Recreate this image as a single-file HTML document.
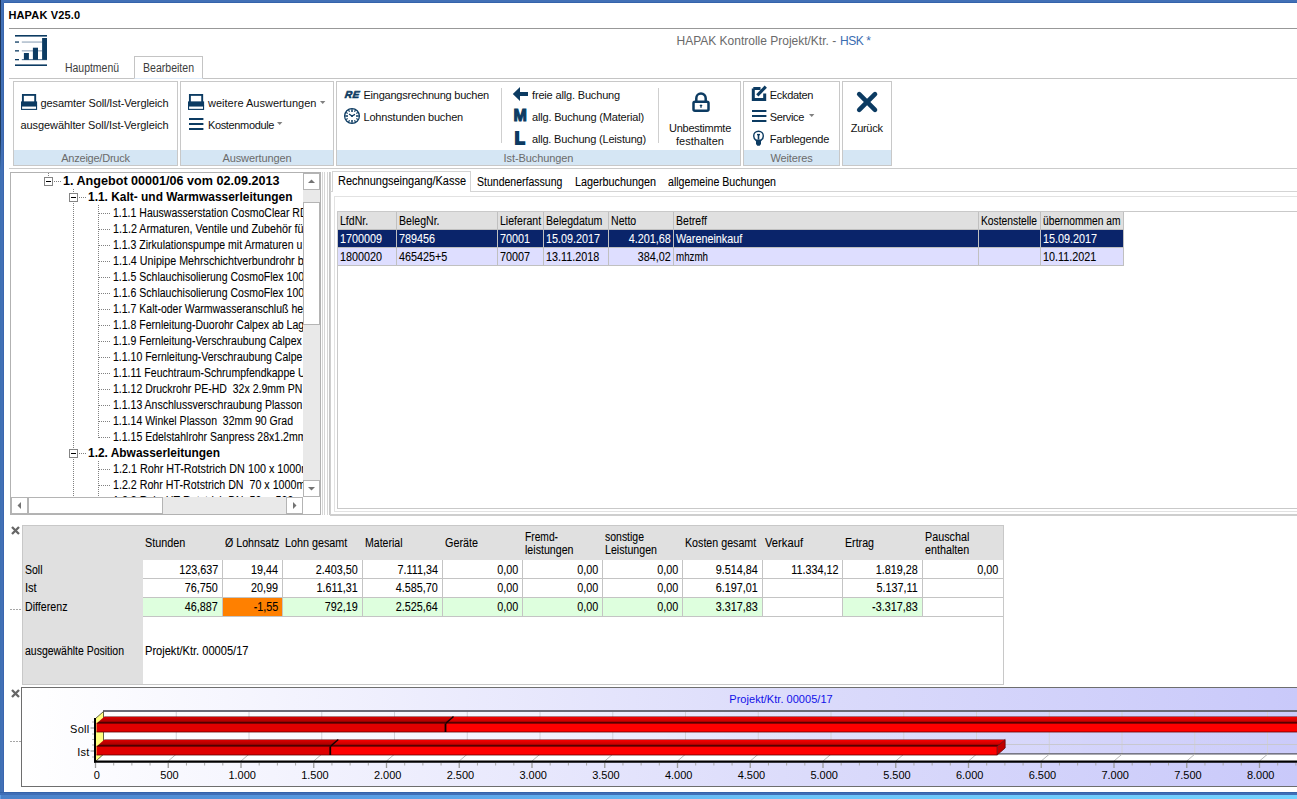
<!DOCTYPE html>
<html lang="de"><head><meta charset="utf-8"><title>HAPAK V25.0</title>
<style>
html,body{margin:0;padding:0;}
body{width:1297px;height:799px;overflow:hidden;background:#fff;position:relative;font-family:'Liberation Sans', sans-serif;}
#app{position:absolute;left:0;top:0;width:1297px;height:799px;overflow:hidden;}
#app div,#app span,#app svg{position:absolute;box-sizing:border-box;}
</style></head><body><div id="app">
<div style="left:0px;top:0px;width:1297px;height:3px;background:#4270b6;"></div>
<div style="left:0px;top:2px;width:1297px;height:1px;background:#3563ab;"></div>
<div style="left:0px;top:0px;width:4px;height:799px;background:#4270b6;"></div>
<div style="left:3px;top:3px;width:1px;height:789px;background:#3a66ae;"></div>
<div style="left:0px;top:0px;width:1px;height:799px;background:#3e70b2;"></div>
<div style="left:0px;top:0px;width:1px;height:170px;background:linear-gradient(180deg,#1d3358 0,#1e3c60 140px,#3e70b2 170px);"></div>
<div style="left:0px;top:792px;width:1297px;height:7px;background:linear-gradient(90deg,#4a80c8 0,#5aa0e6 400px,#6cc4f8 800px,#74d2fe 1297px);"></div>
<div style="left:0px;top:792px;width:1297px;height:3px;background:#3f6eb6;"></div>
<div style="left:0px;top:792px;width:1297px;height:1px;background:#3362aa;"></div>
<div style="left:0px;top:795px;width:1px;height:4px;background:#5e9be0;"></div>
<span style="top:7.19px;font:bold 11px 'Liberation Sans', sans-serif;line-height:16px;color:#000;white-space:pre;letter-spacing:0.172px;left:8.4px;">HAPAK V25.0</span>
<div style="left:9px;top:28px;width:1288px;height:1px;background:#989898;"></div>
<svg style="left:14px;top:34px" width="35" height="34" viewBox="14 34 35 34">
<rect x="15" y="35" width="32" height="1.6" fill="#0c3b62"/>
<rect x="15" y="64.4" width="32" height="1.6" fill="#0c3b62"/>
<rect x="15" y="41.4" width="4" height="1.3" fill="#0c3b62"/>
<rect x="15" y="50.2" width="4" height="1.3" fill="#0c3b62"/>
<rect x="15" y="59" width="4" height="1.3" fill="#0c3b62"/>
<rect x="21.8" y="41.5" width="20.2" height="1.1" fill="#8fa3b8"/>
<rect x="21.8" y="50.3" width="20.2" height="1.1" fill="#8fa3b8"/>
<rect x="21.8" y="59" width="25.2" height="1.2" fill="#5f7d99"/>
<rect x="23.9" y="53" width="5" height="6.8" fill="#0c3b62"/>
<rect x="32.9" y="47.7" width="5.1" height="12.1" fill="#0c3b62"/>
<rect x="42.1" y="38" width="4.9" height="21.8" fill="#0c3b62"/>
</svg>
<span style="top:33.34px;font:12px 'Liberation Sans', sans-serif;line-height:16px;color:#6a6a6a;white-space:pre;letter-spacing:-0.006px;left:676.5px;">HAPAK Kontrolle Projekt/Ktr. - </span>
<span style="top:33.34px;font:12px 'Liberation Sans', sans-serif;line-height:16px;color:#3a6cb0;white-space:pre;letter-spacing:-0.438px;left:840px;">HSK *</span>
<div style="left:9px;top:78px;width:1288px;height:1px;background:#c4c4c4;"></div>
<div style="left:134px;top:56px;width:69px;height:23px;background:#fff;border:1px solid #c4c4c4;border-bottom:1px solid #dfeaf6;"></div>
<span style="top:59.84px;font:12px 'Liberation Sans', sans-serif;line-height:16px;color:#3c3c3c;white-space:pre;left:65.0px;transform:scaleX(0.8703);transform-origin:0 0;-webkit-text-stroke:0;">Hauptmenü</span>
<span style="top:59.84px;font:12px 'Liberation Sans', sans-serif;line-height:16px;color:#3c3c3c;white-space:pre;left:142.5px;transform:scaleX(0.8786);transform-origin:0 0;-webkit-text-stroke:0;">Bearbeiten</span>
<div style="left:13px;top:81px;width:165px;height:85px;background:#fff;border:1px solid #c8c8c8;"></div>
<div style="left:14px;top:150px;width:163px;height:15px;background:#d5e6f4;"></div>
<span style="top:149.79px;font:11px 'Liberation Sans', sans-serif;line-height:16px;color:#6b6b6b;white-space:pre;letter-spacing:-0.234px;left:61.25px;">Anzeige/Druck</span>
<div style="left:180px;top:81px;width:154px;height:85px;background:#fff;border:1px solid #c8c8c8;"></div>
<div style="left:181px;top:150px;width:152px;height:15px;background:#d5e6f4;"></div>
<span style="top:149.79px;font:11px 'Liberation Sans', sans-serif;line-height:16px;color:#6b6b6b;white-space:pre;letter-spacing:-0.111px;left:222.50px;">Auswertungen</span>
<div style="left:336px;top:81px;width:405px;height:85px;background:#fff;border:1px solid #c8c8c8;"></div>
<div style="left:337px;top:150px;width:403px;height:15px;background:#d5e6f4;"></div>
<span style="top:149.79px;font:11px 'Liberation Sans', sans-serif;line-height:16px;color:#6b6b6b;white-space:pre;letter-spacing:-0.088px;left:503.60px;">Ist-Buchungen</span>
<div style="left:743px;top:81px;width:97px;height:85px;background:#fff;border:1px solid #c8c8c8;"></div>
<div style="left:744px;top:150px;width:95px;height:15px;background:#d5e6f4;"></div>
<span style="top:149.79px;font:11px 'Liberation Sans', sans-serif;line-height:16px;color:#6b6b6b;white-space:pre;letter-spacing:-0.150px;left:770.50px;">Weiteres</span>
<div style="left:842px;top:81px;width:50px;height:85px;background:#fff;border:1px solid #c8c8c8;"></div>
<div style="left:843px;top:150px;width:48px;height:15px;background:#d5e6f4;"></div>
<div style="left:9px;top:168px;width:1288px;height:1px;background:#cbcbcb;"></div>
<svg style="left:20.9px;top:93.9px" width="17" height="17" viewBox="0 0 17 17">
<rect x="1.9" y="0.9" width="12.3" height="8" fill="none" stroke="#0c3b62" stroke-width="1.9"/>
<rect x="0" y="7.4" width="16.1" height="4.6" fill="#0c3b62"/>
<rect x="0.55" y="12" width="15" height="3.4" fill="#fff" stroke="#0c3b62" stroke-width="1.1"/>
</svg>
<span style="top:95.19px;font:11px 'Liberation Sans', sans-serif;line-height:16px;color:#111;white-space:pre;letter-spacing:-0.105px;left:40.5px;">gesamter Soll/Ist-Vergleich</span>
<span style="top:117.19px;font:11px 'Liberation Sans', sans-serif;line-height:16px;color:#111;white-space:pre;letter-spacing:-0.078px;left:20.5px;">ausgewählter Soll/Ist-Vergleich</span>
<svg style="left:188.4px;top:93.9px" width="17" height="17" viewBox="0 0 17 17">
<rect x="1.9" y="0.9" width="12.3" height="8" fill="none" stroke="#0c3b62" stroke-width="1.9"/>
<rect x="0" y="7.4" width="16.1" height="4.6" fill="#0c3b62"/>
<rect x="0.55" y="12" width="15" height="3.4" fill="#fff" stroke="#0c3b62" stroke-width="1.1"/>
</svg>
<span style="top:95.19px;font:11px 'Liberation Sans', sans-serif;line-height:16px;color:#111;white-space:pre;letter-spacing:0.013px;left:208px;">weitere Auswertungen</span>
<svg style="left:319.5px;top:100.5px" width="6" height="4" viewBox="0 0 6 4"><path d="M0 0H5.4L2.7 3Z" fill="#808080"/></svg>
<svg style="left:188.6px;top:118px" width="15" height="13" viewBox="0 0 15 13">
<rect x="0" y="0" width="14.4" height="2" fill="#0c3b62"/><rect x="0" y="5" width="14.4" height="2" fill="#0c3b62"/><rect x="0" y="10" width="14.4" height="2" fill="#0c3b62"/></svg>
<span style="top:117.19px;font:11px 'Liberation Sans', sans-serif;line-height:16px;color:#111;white-space:pre;letter-spacing:-0.361px;left:208px;">Kostenmodule</span>
<svg style="left:277px;top:122px" width="6" height="4" viewBox="0 0 6 4"><path d="M0 0H5.4L2.7 3Z" fill="#808080"/></svg>
<span style="top:86.53px;font:italic bold 10px 'Liberation Sans', sans-serif;line-height:16px;color:#0c3b62;white-space:pre;letter-spacing:0.547px;left:344.6px;-webkit-text-stroke:0.6px #0c3b62;transform:skewX(-8deg);">RE</span>
<span style="top:87.19px;font:11px 'Liberation Sans', sans-serif;line-height:16px;color:#111;white-space:pre;letter-spacing:-0.234px;left:363.5px;">Eingangsrechnung buchen</span>
<svg style="left:343px;top:107px" width="18" height="18" viewBox="0 0 18 18">
<circle cx="9" cy="9" r="7.4" fill="none" stroke="#0c3b62" stroke-width="1.25"/>
<g stroke="#0c3b62" stroke-width="1.5">
<path d="M9 2.2V5 M9 13V15.8 M2.2 9H5 M13 9H15.8"/>
<path d="M5.6 3.1l.9 1.6 M12.4 3.1l-.9 1.6 M3.1 5.6l1.6 .9 M14.9 5.6l-1.6 .9 M3.1 12.4l1.6-.9 M14.9 12.4l-1.6-.9 M5.6 14.9l.9-1.6 M12.4 14.9l-.9-1.6" stroke-width="1.2"/>
<path d="M9 9L6 7 M9 9l3-1.6" stroke-width="1.3"/></g>
<circle cx="9" cy="9" r="1.1" fill="#0c3b62"/></svg>
<span style="top:109.19px;font:11px 'Liberation Sans', sans-serif;line-height:16px;color:#111;white-space:pre;letter-spacing:-0.181px;left:363.5px;">Lohnstunden buchen</span>
<div style="left:501px;top:88px;width:1px;height:55px;background:#cfcfcf;"></div>
<svg style="left:512px;top:86px" width="17" height="16" viewBox="512 86 17 16"><path d="M512.8 94L520 87.1V92H528V96H520V100.9Z" fill="#0c3b62"/></svg>
<span style="top:87.19px;font:11px 'Liberation Sans', sans-serif;line-height:16px;color:#111;white-space:pre;letter-spacing:-0.164px;left:532px;">freie allg. Buchung</span>
<span style="top:107.86px;font:bold 16px 'Liberation Sans', sans-serif;line-height:16px;color:#0c3b62;white-space:pre;letter-spacing:-0.128px;left:513.4px;-webkit-text-stroke:1.1px #0c3b62;">M</span>
<span style="top:109.19px;font:11px 'Liberation Sans', sans-serif;line-height:16px;color:#111;white-space:pre;letter-spacing:-0.174px;left:532px;">allg. Buchung (Material)</span>
<span style="top:130.18px;font:bold 16.5px 'Liberation Sans', sans-serif;line-height:16px;color:#0c3b62;white-space:pre;left:514.7px;-webkit-text-stroke:1.8px #0c3b62;">L</span>
<span style="top:131.19px;font:11px 'Liberation Sans', sans-serif;line-height:16px;color:#111;white-space:pre;letter-spacing:-0.193px;left:532px;">allg. Buchung (Leistung)</span>
<div style="left:658px;top:88px;width:1px;height:55px;background:#cfcfcf;"></div>
<svg style="left:690px;top:90px" width="22" height="24" viewBox="690 90 22 24">
<path d="M696.3 101.5V98.2a4.7 4.7 0 0 1 9.4 0V101.5" fill="none" stroke="#0c3b62" stroke-width="2.5"/>
<rect x="693.5" y="101.7" width="15" height="9.1" rx="1.5" fill="#fff" stroke="#0c3b62" stroke-width="2.5"/>
<path d="M701 104.3l1.7 1.8h-1v1.6h-1.4v-1.6h-1z" fill="#0c3b62"/></svg>
<span style="top:120.19px;font:11px 'Liberation Sans', sans-serif;line-height:16px;color:#111;white-space:pre;letter-spacing:-0.254px;left:669.00px;">Unbestimmte</span>
<span style="top:133.19px;font:11px 'Liberation Sans', sans-serif;line-height:16px;color:#111;white-space:pre;letter-spacing:0.030px;left:676.00px;">festhalten</span>
<svg style="left:751px;top:85px" width="17" height="17" viewBox="751 85 17 17">
<path d="M753.3 88.6H760.5 M753.3 88.6V99.4H764.7V93.5" fill="none" stroke="#0c3b62" stroke-width="3"/>
<path d="M757.3 95.3L765.8 86.7" stroke="#0c3b62" stroke-width="3.1"/></svg>
<span style="top:87.19px;font:11px 'Liberation Sans', sans-serif;line-height:16px;color:#111;white-space:pre;letter-spacing:-0.322px;left:769.8px;">Eckdaten</span>
<svg style="left:751.8px;top:110px" width="15" height="13" viewBox="0 0 15 13">
<rect x="0" y="0" width="14.4" height="2" fill="#0c3b62"/><rect x="0" y="5" width="14.4" height="2" fill="#0c3b62"/><rect x="0" y="10" width="14.4" height="2" fill="#0c3b62"/></svg>
<span style="top:109.19px;font:11px 'Liberation Sans', sans-serif;line-height:16px;color:#111;white-space:pre;letter-spacing:-0.355px;left:769.8px;">Service</span>
<svg style="left:809px;top:114.2px" width="6" height="4" viewBox="0 0 6 4"><path d="M0 0H5.4L2.7 3Z" fill="#808080"/></svg>
<svg style="left:752px;top:129px" width="14" height="18" viewBox="752 129 14 18">
<path d="M756.3 140.6c-1.6-1-2.6-2.6-2.6-4.6a4.8 4.8 0 0 1 9.6 0c0 2-1 3.6-2.6 4.6" fill="none" stroke="#0c3b62" stroke-width="1.4"/>
<path d="M756 139.5h5v4.5l-1.3 1.8h-2.4l-1.3-1.8z" fill="#0c3b62"/>
<path d="M758.5 134.5v5" stroke="#0c3b62" stroke-width="1.6"/><path d="M757 134.6h3" stroke="#0c3b62" stroke-width="1.4"/></svg>
<span style="top:131.19px;font:11px 'Liberation Sans', sans-serif;line-height:16px;color:#111;white-space:pre;letter-spacing:-0.226px;left:769.8px;">Farblegende</span>
<svg style="left:855px;top:90px" width="24" height="24" viewBox="855 90 24 24"><path d="M859.2 94.1L875 109.9 M875 94.1L859.2 109.9" stroke="#0c3b62" stroke-width="4.6" stroke-linecap="round"/></svg>
<span style="top:120.19px;font:11px 'Liberation Sans', sans-serif;line-height:16px;color:#111;white-space:pre;letter-spacing:-0.271px;left:850.70px;">Zurück</span>
<div style="left:10px;top:172px;width:311px;height:343px;background:#fff;border:1px solid #b2b2b2;"></div>
<div style="left:11px;top:173px;width:292px;height:324px;overflow:hidden">
<span style="top:-0.16px;font:bold 12px 'Liberation Sans', sans-serif;line-height:16px;color:#000;white-space:pre;left:52.0px;transform:scaleX(1.0492);transform-origin:0 0;">1. Angebot 00001/06 vom 02.09.2013</span>
<span style="top:15.84px;font:bold 12px 'Liberation Sans', sans-serif;line-height:16px;color:#000;white-space:pre;left:77.0px;transform:scaleX(0.9946);transform-origin:0 0;">1.1. Kalt- und Warmwasserleitungen</span>
<span style="top:31.84px;font:12px 'Liberation Sans', sans-serif;line-height:16px;color:#000;white-space:pre;-webkit-text-stroke:0.08px #000;left:101.5px;transform:scaleX(0.8760);transform-origin:0 0;">1.1.1 Hauswasserstation CosmoClear RD 1</span>
<span style="top:47.84px;font:12px 'Liberation Sans', sans-serif;line-height:16px;color:#000;white-space:pre;-webkit-text-stroke:0.08px #000;left:101.5px;transform:scaleX(0.8950);transform-origin:0 0;">1.1.2 Armaturen, Ventile und Zubehör fü</span>
<span style="top:63.84px;font:12px 'Liberation Sans', sans-serif;line-height:16px;color:#000;white-space:pre;-webkit-text-stroke:0.08px #000;left:101.5px;transform:scaleX(0.8760);transform-origin:0 0;">1.1.3 Zirkulationspumpe mit Armaturen u</span>
<span style="top:79.84px;font:12px 'Liberation Sans', sans-serif;line-height:16px;color:#000;white-space:pre;-webkit-text-stroke:0.08px #000;left:101.5px;transform:scaleX(0.8930);transform-origin:0 0;">1.1.4 Unipipe Mehrschichtverbundrohr b</span>
<span style="top:95.84px;font:12px 'Liberation Sans', sans-serif;line-height:16px;color:#000;white-space:pre;-webkit-text-stroke:0.08px #000;left:101.5px;transform:scaleX(0.8760);transform-origin:0 0;">1.1.5 Schlauchisolierung CosmoFlex 100</span>
<span style="top:111.84px;font:12px 'Liberation Sans', sans-serif;line-height:16px;color:#000;white-space:pre;-webkit-text-stroke:0.08px #000;left:101.5px;transform:scaleX(0.8760);transform-origin:0 0;">1.1.6 Schlauchisolierung CosmoFlex 100</span>
<span style="top:127.84px;font:12px 'Liberation Sans', sans-serif;line-height:16px;color:#000;white-space:pre;-webkit-text-stroke:0.08px #000;left:101.5px;transform:scaleX(0.8760);transform-origin:0 0;">1.1.7 Kalt-oder Warmwasseranschluß he</span>
<span style="top:143.84px;font:12px 'Liberation Sans', sans-serif;line-height:16px;color:#000;white-space:pre;-webkit-text-stroke:0.08px #000;left:101.5px;transform:scaleX(0.8760);transform-origin:0 0;">1.1.8 Fernleitung-Duorohr Calpex ab Lag</span>
<span style="top:159.84px;font:12px 'Liberation Sans', sans-serif;line-height:16px;color:#000;white-space:pre;-webkit-text-stroke:0.08px #000;left:101.5px;transform:scaleX(0.8760);transform-origin:0 0;">1.1.9 Fernleitung-Verschraubung Calpex</span>
<span style="top:175.84px;font:12px 'Liberation Sans', sans-serif;line-height:16px;color:#000;white-space:pre;-webkit-text-stroke:0.08px #000;left:101.5px;transform:scaleX(0.8760);transform-origin:0 0;">1.1.10 Fernleitung-Verschraubung Calpe</span>
<span style="top:191.84px;font:12px 'Liberation Sans', sans-serif;line-height:16px;color:#000;white-space:pre;-webkit-text-stroke:0.08px #000;left:101.5px;transform:scaleX(0.8760);transform-origin:0 0;">1.1.11 Feuchtraum-Schrumpfendkappe U</span>
<span style="top:207.84px;font:12px 'Liberation Sans', sans-serif;line-height:16px;color:#000;white-space:pre;-webkit-text-stroke:0.08px #000;left:101.5px;transform:scaleX(0.8760);transform-origin:0 0;">1.1.12 Druckrohr PE-HD  32x 2.9mm PN</span>
<span style="top:223.84px;font:12px 'Liberation Sans', sans-serif;line-height:16px;color:#000;white-space:pre;-webkit-text-stroke:0.08px #000;left:101.5px;transform:scaleX(0.8760);transform-origin:0 0;">1.1.13 Anschlussverschraubung Plasson</span>
<span style="top:239.84px;font:12px 'Liberation Sans', sans-serif;line-height:16px;color:#000;white-space:pre;-webkit-text-stroke:0.08px #000;left:101.5px;transform:scaleX(0.8762);transform-origin:0 0;">1.1.14 Winkel Plasson  32mm 90 Grad</span>
<span style="top:255.84px;font:12px 'Liberation Sans', sans-serif;line-height:16px;color:#000;white-space:pre;-webkit-text-stroke:0.08px #000;left:101.5px;transform:scaleX(0.8760);transform-origin:0 0;">1.1.15 Edelstahlrohr Sanpress 28x1.2mm</span>
<span style="top:271.84px;font:bold 12px 'Liberation Sans', sans-serif;line-height:16px;color:#000;white-space:pre;left:77.0px;transform:scaleX(0.9929);transform-origin:0 0;">1.2. Abwasserleitungen</span>
<span style="top:287.84px;font:12px 'Liberation Sans', sans-serif;line-height:16px;color:#000;white-space:pre;-webkit-text-stroke:0.08px #000;left:101.5px;transform:scaleX(0.8990);transform-origin:0 0;">1.2.1 Rohr HT-Rotstrich DN 100 x 1000m</span>
<span style="top:303.84px;font:12px 'Liberation Sans', sans-serif;line-height:16px;color:#000;white-space:pre;-webkit-text-stroke:0.08px #000;left:101.5px;transform:scaleX(0.8900);transform-origin:0 0;">1.2.2 Rohr HT-Rotstrich DN  70 x 1000m</span>
<span style="top:319.84px;font:12px 'Liberation Sans', sans-serif;line-height:16px;color:#000;white-space:pre;-webkit-text-stroke:0.08px #000;left:101.5px;transform:scaleX(0.8900);transform-origin:0 0;">1.2.3 Rohr HT-Rotstrich DN  50 x  500m</span>
<div style="left:37px;top:0px;width:1px;height:4px;background:repeating-linear-gradient(180deg,#808080 0 1px,transparent 1px 2px);background-position:0 0px;"></div>
<div style="left:33px;top:4px;width:9px;height:9px;background:#fff;border:1px solid #848484;"></div>
<div style="left:35px;top:8px;width:5px;height:1px;background:#000;"></div>
<div style="left:43px;top:8px;width:8px;height:1px;background:repeating-linear-gradient(90deg,#808080 0 1px,transparent 1px 2px);"></div>
<div style="left:62px;top:16px;width:1px;height:4px;background:repeating-linear-gradient(180deg,#808080 0 1px,transparent 1px 2px);background-position:0 0px;"></div>
<div style="left:58px;top:20px;width:9px;height:9px;background:#fff;border:1px solid #848484;"></div>
<div style="left:60px;top:24px;width:5px;height:1px;background:#000;"></div>
<div style="left:68px;top:24px;width:8px;height:1px;background:repeating-linear-gradient(90deg,#808080 0 1px,transparent 1px 2px);"></div>
<div style="left:62px;top:30px;width:1px;height:246px;background:repeating-linear-gradient(180deg,#808080 0 1px,transparent 1px 2px);background-position:0 0px;"></div>
<div style="left:87px;top:32px;width:1px;height:233px;background:repeating-linear-gradient(180deg,#808080 0 1px,transparent 1px 2px);background-position:0 0px;"></div>
<div style="left:88px;top:40px;width:12px;height:1px;background:repeating-linear-gradient(90deg,#808080 0 1px,transparent 1px 2px);"></div>
<div style="left:88px;top:56px;width:12px;height:1px;background:repeating-linear-gradient(90deg,#808080 0 1px,transparent 1px 2px);"></div>
<div style="left:88px;top:72px;width:12px;height:1px;background:repeating-linear-gradient(90deg,#808080 0 1px,transparent 1px 2px);"></div>
<div style="left:88px;top:88px;width:12px;height:1px;background:repeating-linear-gradient(90deg,#808080 0 1px,transparent 1px 2px);"></div>
<div style="left:88px;top:104px;width:12px;height:1px;background:repeating-linear-gradient(90deg,#808080 0 1px,transparent 1px 2px);"></div>
<div style="left:88px;top:120px;width:12px;height:1px;background:repeating-linear-gradient(90deg,#808080 0 1px,transparent 1px 2px);"></div>
<div style="left:88px;top:136px;width:12px;height:1px;background:repeating-linear-gradient(90deg,#808080 0 1px,transparent 1px 2px);"></div>
<div style="left:88px;top:152px;width:12px;height:1px;background:repeating-linear-gradient(90deg,#808080 0 1px,transparent 1px 2px);"></div>
<div style="left:88px;top:168px;width:12px;height:1px;background:repeating-linear-gradient(90deg,#808080 0 1px,transparent 1px 2px);"></div>
<div style="left:88px;top:184px;width:12px;height:1px;background:repeating-linear-gradient(90deg,#808080 0 1px,transparent 1px 2px);"></div>
<div style="left:88px;top:200px;width:12px;height:1px;background:repeating-linear-gradient(90deg,#808080 0 1px,transparent 1px 2px);"></div>
<div style="left:88px;top:216px;width:12px;height:1px;background:repeating-linear-gradient(90deg,#808080 0 1px,transparent 1px 2px);"></div>
<div style="left:88px;top:232px;width:12px;height:1px;background:repeating-linear-gradient(90deg,#808080 0 1px,transparent 1px 2px);"></div>
<div style="left:88px;top:248px;width:12px;height:1px;background:repeating-linear-gradient(90deg,#808080 0 1px,transparent 1px 2px);"></div>
<div style="left:88px;top:264px;width:12px;height:1px;background:repeating-linear-gradient(90deg,#808080 0 1px,transparent 1px 2px);"></div>
<div style="left:58px;top:276px;width:9px;height:9px;background:#fff;border:1px solid #848484;"></div>
<div style="left:60px;top:280px;width:5px;height:1px;background:#000;"></div>
<div style="left:68px;top:280px;width:8px;height:1px;background:repeating-linear-gradient(90deg,#808080 0 1px,transparent 1px 2px);"></div>
<div style="left:62px;top:286px;width:1px;height:41px;background:repeating-linear-gradient(180deg,#808080 0 1px,transparent 1px 2px);background-position:0 0px;"></div>
<div style="left:87px;top:288px;width:1px;height:39px;background:repeating-linear-gradient(180deg,#808080 0 1px,transparent 1px 2px);background-position:0 0px;"></div>
<div style="left:88px;top:296px;width:12px;height:1px;background:repeating-linear-gradient(90deg,#808080 0 1px,transparent 1px 2px);"></div>
<div style="left:88px;top:312px;width:12px;height:1px;background:repeating-linear-gradient(90deg,#808080 0 1px,transparent 1px 2px);"></div>
<div style="left:88px;top:328px;width:12px;height:1px;background:repeating-linear-gradient(90deg,#808080 0 1px,transparent 1px 2px);"></div>
</div>
<div style="left:303px;top:173px;width:17px;height:324px;background:#e9e9e9;"></div>
<div style="left:303px;top:173px;width:17px;height:17px;background:#fff;border:1px solid #b4b4b4;"></div>
<svg style="left:0;top:0" width="400" height="600" viewBox="0 0 400 600"><path d="M308.0 183.0L311.5 179.5L315.0 183.0Z" fill="#737373"/></svg>
<div style="left:303px;top:202px;width:17px;height:123px;background:#fff;border:1px solid #b4b4b4;"></div>
<div style="left:303px;top:480px;width:17px;height:17px;background:#fff;border:1px solid #b4b4b4;"></div>
<svg style="left:0;top:0" width="400" height="600" viewBox="0 0 400 600"><path d="M308.0 487.0L311.5 490.5L315.0 487.0Z" fill="#737373"/></svg>
<div style="left:11px;top:497px;width:292px;height:17px;background:#e9e9e9;"></div>
<div style="left:11px;top:497px;width:17px;height:17px;background:#fff;border:1px solid #b4b4b4;"></div>
<svg style="left:0;top:0" width="400" height="600" viewBox="0 0 400 600"><path d="M21.0 502.0L17.5 505.5L21.0 509.0Z" fill="#737373"/></svg>
<div style="left:28px;top:497px;width:135px;height:17px;background:#fff;border:1px solid #b4b4b4;"></div>
<div style="left:286px;top:497px;width:17px;height:17px;background:#fff;border:1px solid #b4b4b4;"></div>
<svg style="left:0;top:0" width="400" height="600" viewBox="0 0 400 600"><path d="M293.0 502.0L296.5 505.5L293.0 509.0Z" fill="#737373"/></svg>
<div style="left:303px;top:497px;width:17px;height:17px;background:#fff;"></div>
<div style="left:322px;top:172px;width:1px;height:343px;background:#d6d6d6;"></div>
<div style="left:324px;top:172px;width:1px;height:343px;background:#d6d6d6;"></div>
<div style="left:327px;top:172px;width:1px;height:343px;background:#d6d6d6;"></div>
<div style="left:329px;top:172px;width:1px;height:343px;background:#c6c6c6;"></div>
<div style="left:330px;top:172px;width:1px;height:343px;background:#cfcfcf;"></div>
<div style="left:330px;top:191px;width:967px;height:1px;background:#d4d4d4;"></div>
<div style="left:330px;top:514px;width:967px;height:2px;background:#cecece;"></div>
<div style="left:334px;top:196px;width:970px;height:316px;border:1px solid #e2e2e2;"></div>
<div style="left:337px;top:211px;width:970px;height:298px;border:1px solid #c9c9c9;"></div>
<div style="left:332px;top:171px;width:139px;height:21px;background:#fff;border:1px solid #d4d4d4;border-bottom:none;"></div>
<span style="top:173.34px;font:12px 'Liberation Sans', sans-serif;line-height:16px;color:#000;white-space:pre;-webkit-text-stroke:0.08px #000;left:337.5px;transform:scaleX(0.9136);transform-origin:0 0;">Rechnungseingang/Kasse</span>
<span style="top:174.34px;font:12px 'Liberation Sans', sans-serif;line-height:16px;color:#000;white-space:pre;-webkit-text-stroke:0.08px #000;left:476.6px;transform:scaleX(0.8767);transform-origin:0 0;">Stundenerfassung</span>
<span style="top:174.34px;font:12px 'Liberation Sans', sans-serif;line-height:16px;color:#000;white-space:pre;-webkit-text-stroke:0.08px #000;left:574.5px;transform:scaleX(0.8991);transform-origin:0 0;">Lagerbuchungen</span>
<span style="top:174.34px;font:12px 'Liberation Sans', sans-serif;line-height:16px;color:#000;white-space:pre;-webkit-text-stroke:0.08px #000;left:667.5px;transform:scaleX(0.8846);transform-origin:0 0;">allgemeine Buchungen</span>
<div style="left:338px;top:212px;width:786px;height:18px;background:#e0e0e0;"></div>
<div style="left:338px;top:230px;width:786px;height:18px;background:#0a246a;"></div>
<div style="left:338px;top:248px;width:786px;height:18px;background:#dedeff;"></div>
<div style="left:338px;top:229px;width:786px;height:1px;background:#c0c0c0;"></div>
<div style="left:338px;top:247px;width:786px;height:1px;background:#c0c0c0;"></div>
<div style="left:338px;top:265px;width:786px;height:1px;background:#c0c0c0;"></div>
<div style="left:396px;top:212px;width:1px;height:54px;background:#c0c0c0;"></div>
<span style="top:212.84px;font:12px 'Liberation Sans', sans-serif;line-height:16px;color:#000;white-space:pre;-webkit-text-stroke:0.08px #000;left:340.0px;transform:scaleX(0.8800);transform-origin:0 0;">LfdNr.</span>
<div style="left:497px;top:212px;width:1px;height:54px;background:#c0c0c0;"></div>
<span style="top:212.84px;font:12px 'Liberation Sans', sans-serif;line-height:16px;color:#000;white-space:pre;-webkit-text-stroke:0.08px #000;left:399.0px;transform:scaleX(0.8800);transform-origin:0 0;">BelegNr.</span>
<div style="left:543px;top:212px;width:1px;height:54px;background:#c0c0c0;"></div>
<span style="top:212.84px;font:12px 'Liberation Sans', sans-serif;line-height:16px;color:#000;white-space:pre;-webkit-text-stroke:0.08px #000;left:500.0px;transform:scaleX(0.8800);transform-origin:0 0;">Lieferant</span>
<div style="left:608px;top:212px;width:1px;height:54px;background:#c0c0c0;"></div>
<span style="top:212.84px;font:12px 'Liberation Sans', sans-serif;line-height:16px;color:#000;white-space:pre;-webkit-text-stroke:0.08px #000;left:546.0px;transform:scaleX(0.8800);transform-origin:0 0;">Belegdatum</span>
<div style="left:673px;top:212px;width:1px;height:54px;background:#c0c0c0;"></div>
<span style="top:212.84px;font:12px 'Liberation Sans', sans-serif;line-height:16px;color:#000;white-space:pre;-webkit-text-stroke:0.08px #000;left:611.0px;transform:scaleX(0.8800);transform-origin:0 0;">Netto</span>
<div style="left:978px;top:212px;width:1px;height:54px;background:#c0c0c0;"></div>
<span style="top:212.84px;font:12px 'Liberation Sans', sans-serif;line-height:16px;color:#000;white-space:pre;-webkit-text-stroke:0.08px #000;left:676.0px;transform:scaleX(0.8800);transform-origin:0 0;">Betreff</span>
<div style="left:1040px;top:212px;width:1px;height:54px;background:#c0c0c0;"></div>
<span style="top:212.84px;font:12px 'Liberation Sans', sans-serif;line-height:16px;color:#000;white-space:pre;-webkit-text-stroke:0.08px #000;left:981.0px;transform:scaleX(0.8566);transform-origin:0 0;">Kostenstelle</span>
<div style="left:1123px;top:212px;width:1px;height:54px;background:#c0c0c0;"></div>
<span style="top:212.84px;font:12px 'Liberation Sans', sans-serif;line-height:16px;color:#000;white-space:pre;-webkit-text-stroke:0.08px #000;left:1043.0px;transform:scaleX(0.8543);transform-origin:0 0;">übernommen am</span>
<span style="top:230.84px;font:12px 'Liberation Sans', sans-serif;line-height:16px;color:#fff;white-space:pre;-webkit-text-stroke:0.08px #fff;left:340.0px;transform:scaleX(0.9000);transform-origin:0 0;">1700009</span>
<span style="top:230.84px;font:12px 'Liberation Sans', sans-serif;line-height:16px;color:#fff;white-space:pre;-webkit-text-stroke:0.08px #fff;left:399.0px;transform:scaleX(0.9000);transform-origin:0 0;">789456</span>
<span style="top:230.84px;font:12px 'Liberation Sans', sans-serif;line-height:16px;color:#fff;white-space:pre;-webkit-text-stroke:0.08px #fff;left:500.0px;transform:scaleX(0.9000);transform-origin:0 0;">70001</span>
<span style="top:230.84px;font:12px 'Liberation Sans', sans-serif;line-height:16px;color:#fff;white-space:pre;-webkit-text-stroke:0.08px #fff;left:546.0px;transform:scaleX(0.9000);transform-origin:0 0;">15.09.2017</span>
<span style="top:230.84px;font:12px 'Liberation Sans', sans-serif;line-height:16px;color:#fff;white-space:pre;-webkit-text-stroke:0.08px #fff;left:624.28px;transform:scaleX(0.9000);transform-origin:100% 0;">4.201,68</span>
<span style="top:230.84px;font:12px 'Liberation Sans', sans-serif;line-height:16px;color:#fff;white-space:pre;-webkit-text-stroke:0.08px #fff;left:676.0px;transform:scaleX(0.9000);transform-origin:0 0;">Wareneinkauf</span>
<span style="top:230.84px;font:12px 'Liberation Sans', sans-serif;line-height:16px;color:#fff;white-space:pre;-webkit-text-stroke:0.08px #fff;left:1043.0px;transform:scaleX(0.9000);transform-origin:0 0;">15.09.2017</span>
<span style="top:248.84px;font:12px 'Liberation Sans', sans-serif;line-height:16px;color:#000;white-space:pre;-webkit-text-stroke:0.08px #000;left:340.0px;transform:scaleX(0.9000);transform-origin:0 0;">1800020</span>
<span style="top:248.84px;font:12px 'Liberation Sans', sans-serif;line-height:16px;color:#000;white-space:pre;-webkit-text-stroke:0.08px #000;left:399.0px;transform:scaleX(0.9000);transform-origin:0 0;">465425+5</span>
<span style="top:248.84px;font:12px 'Liberation Sans', sans-serif;line-height:16px;color:#000;white-space:pre;-webkit-text-stroke:0.08px #000;left:500.0px;transform:scaleX(0.9000);transform-origin:0 0;">70007</span>
<span style="top:248.84px;font:12px 'Liberation Sans', sans-serif;line-height:16px;color:#000;white-space:pre;-webkit-text-stroke:0.08px #000;left:546.0px;transform:scaleX(0.9000);transform-origin:0 0;">13.11.2018</span>
<span style="top:248.84px;font:12px 'Liberation Sans', sans-serif;line-height:16px;color:#000;white-space:pre;-webkit-text-stroke:0.08px #000;left:634.30px;transform:scaleX(0.9000);transform-origin:100% 0;">384,02</span>
<span style="top:248.84px;font:12px 'Liberation Sans', sans-serif;line-height:16px;color:#000;white-space:pre;-webkit-text-stroke:0.08px #000;left:676.0px;transform:scaleX(0.8133);transform-origin:0 0;">mhzmh</span>
<span style="top:248.84px;font:12px 'Liberation Sans', sans-serif;line-height:16px;color:#000;white-space:pre;-webkit-text-stroke:0.08px #000;left:1043.0px;transform:scaleX(0.9000);transform-origin:0 0;">10.11.2021</span>
<svg style="left:10.5px;top:525.5px" width="9" height="9" viewBox="0 0 9 9"><path d="M1 1L8 8M8 1L1 8" stroke="#666" stroke-width="2.3"/></svg>
<div style="left:10px;top:609px;width:12px;height:1px;background:repeating-linear-gradient(90deg,#a6a6a6 0 2px,transparent 2px 3px);"></div>
<div style="left:22px;top:525px;width:982px;height:160px;background:#e0e0e0;border:1px solid #c8c8c8;"></div>
<div style="left:143px;top:560px;width:860px;height:124px;background:#fff;"></div>
<span style="top:534.84px;font:12px 'Liberation Sans', sans-serif;line-height:16px;color:#000;white-space:pre;-webkit-text-stroke:0.08px #000;left:144.5px;transform:scaleX(0.9034);transform-origin:0 0;">Stunden</span>
<span style="top:534.84px;font:12px 'Liberation Sans', sans-serif;line-height:16px;color:#000;white-space:pre;-webkit-text-stroke:0.08px #000;left:224.5px;transform:scaleX(0.8864);transform-origin:0 0;">Ø Lohnsatz</span>
<span style="top:534.84px;font:12px 'Liberation Sans', sans-serif;line-height:16px;color:#000;white-space:pre;-webkit-text-stroke:0.08px #000;left:284.5px;transform:scaleX(0.8978);transform-origin:0 0;">Lohn gesamt</span>
<span style="top:534.84px;font:12px 'Liberation Sans', sans-serif;line-height:16px;color:#000;white-space:pre;-webkit-text-stroke:0.08px #000;left:364.5px;transform:scaleX(0.8785);transform-origin:0 0;">Material</span>
<span style="top:534.84px;font:12px 'Liberation Sans', sans-serif;line-height:16px;color:#000;white-space:pre;-webkit-text-stroke:0.08px #000;left:444.5px;transform:scaleX(0.8995);transform-origin:0 0;">Geräte</span>
<span style="top:528.84px;font:12px 'Liberation Sans', sans-serif;line-height:16px;color:#000;white-space:pre;-webkit-text-stroke:0.08px #000;left:524.5px;transform:scaleX(0.8533);transform-origin:0 0;">Fremd-</span>
<span style="top:541.84px;font:12px 'Liberation Sans', sans-serif;line-height:16px;color:#000;white-space:pre;-webkit-text-stroke:0.08px #000;left:524.5px;transform:scaleX(0.8864);transform-origin:0 0;">leistungen</span>
<span style="top:528.84px;font:12px 'Liberation Sans', sans-serif;line-height:16px;color:#000;white-space:pre;-webkit-text-stroke:0.08px #000;left:604.5px;transform:scaleX(0.8724);transform-origin:0 0;">sonstige</span>
<span style="top:541.84px;font:12px 'Liberation Sans', sans-serif;line-height:16px;color:#000;white-space:pre;-webkit-text-stroke:0.08px #000;left:604.5px;transform:scaleX(0.8856);transform-origin:0 0;">Leistungen</span>
<span style="top:534.84px;font:12px 'Liberation Sans', sans-serif;line-height:16px;color:#000;white-space:pre;-webkit-text-stroke:0.08px #000;left:684.5px;transform:scaleX(0.8895);transform-origin:0 0;">Kosten gesamt</span>
<span style="top:534.84px;font:12px 'Liberation Sans', sans-serif;line-height:16px;color:#000;white-space:pre;-webkit-text-stroke:0.08px #000;left:764.5px;transform:scaleX(0.9336);transform-origin:0 0;">Verkauf</span>
<span style="top:534.84px;font:12px 'Liberation Sans', sans-serif;line-height:16px;color:#000;white-space:pre;-webkit-text-stroke:0.08px #000;left:844.5px;transform:scaleX(0.8872);transform-origin:0 0;">Ertrag</span>
<span style="top:528.84px;font:12px 'Liberation Sans', sans-serif;line-height:16px;color:#000;white-space:pre;-webkit-text-stroke:0.08px #000;left:924.5px;transform:scaleX(0.8972);transform-origin:0 0;">Pauschal</span>
<span style="top:541.84px;font:12px 'Liberation Sans', sans-serif;line-height:16px;color:#000;white-space:pre;-webkit-text-stroke:0.08px #000;left:924.5px;transform:scaleX(0.8969);transform-origin:0 0;">enthalten</span>
<span style="top:561.84px;font:12px 'Liberation Sans', sans-serif;line-height:16px;color:#000;white-space:pre;-webkit-text-stroke:0.08px #000;left:25.0px;transform:scaleX(0.8743);transform-origin:0 0;">Soll</span>
<span style="top:561.84px;font:12px 'Liberation Sans', sans-serif;line-height:16px;color:#000;white-space:pre;-webkit-text-stroke:0.08px #000;left:174.61px;transform:scaleX(0.9000);transform-origin:100% 0;">123,637</span>
<span style="top:561.84px;font:12px 'Liberation Sans', sans-serif;line-height:16px;color:#000;white-space:pre;-webkit-text-stroke:0.08px #000;left:247.97px;transform:scaleX(0.9000);transform-origin:100% 0;">19,44</span>
<span style="top:561.84px;font:12px 'Liberation Sans', sans-serif;line-height:16px;color:#000;white-space:pre;-webkit-text-stroke:0.08px #000;left:311.28px;transform:scaleX(0.9000);transform-origin:100% 0;">2.403,50</span>
<span style="top:561.84px;font:12px 'Liberation Sans', sans-serif;line-height:16px;color:#000;white-space:pre;-webkit-text-stroke:0.08px #000;left:393.06px;transform:scaleX(0.9000);transform-origin:100% 0;">7.111,34</span>
<span style="top:561.84px;font:12px 'Liberation Sans', sans-serif;line-height:16px;color:#000;white-space:pre;-webkit-text-stroke:0.08px #000;left:494.64px;transform:scaleX(0.9000);transform-origin:100% 0;">0,00</span>
<span style="top:561.84px;font:12px 'Liberation Sans', sans-serif;line-height:16px;color:#000;white-space:pre;-webkit-text-stroke:0.08px #000;left:574.64px;transform:scaleX(0.9000);transform-origin:100% 0;">0,00</span>
<span style="top:561.84px;font:12px 'Liberation Sans', sans-serif;line-height:16px;color:#000;white-space:pre;-webkit-text-stroke:0.08px #000;left:654.64px;transform:scaleX(0.9000);transform-origin:100% 0;">0,00</span>
<span style="top:561.84px;font:12px 'Liberation Sans', sans-serif;line-height:16px;color:#000;white-space:pre;-webkit-text-stroke:0.08px #000;left:711.28px;transform:scaleX(0.9000);transform-origin:100% 0;">9.514,84</span>
<span style="top:561.84px;font:12px 'Liberation Sans', sans-serif;line-height:16px;color:#000;white-space:pre;-webkit-text-stroke:0.08px #000;left:785.50px;transform:scaleX(0.9000);transform-origin:100% 0;">11.334,12</span>
<span style="top:561.84px;font:12px 'Liberation Sans', sans-serif;line-height:16px;color:#000;white-space:pre;-webkit-text-stroke:0.08px #000;left:871.28px;transform:scaleX(0.9000);transform-origin:100% 0;">1.819,28</span>
<span style="top:561.84px;font:12px 'Liberation Sans', sans-serif;line-height:16px;color:#000;white-space:pre;-webkit-text-stroke:0.08px #000;left:974.64px;transform:scaleX(0.9000);transform-origin:100% 0;">0,00</span>
<div style="left:143px;top:578px;width:860px;height:1px;background:#c4c4c4;"></div>
<span style="top:579.84px;font:12px 'Liberation Sans', sans-serif;line-height:16px;color:#000;white-space:pre;-webkit-text-stroke:0.08px #000;left:25.0px;transform:scaleX(0.9233);transform-origin:0 0;">Ist</span>
<span style="top:579.84px;font:12px 'Liberation Sans', sans-serif;line-height:16px;color:#000;white-space:pre;-webkit-text-stroke:0.08px #000;left:181.30px;transform:scaleX(0.9000);transform-origin:100% 0;">76,750</span>
<span style="top:579.84px;font:12px 'Liberation Sans', sans-serif;line-height:16px;color:#000;white-space:pre;-webkit-text-stroke:0.08px #000;left:247.97px;transform:scaleX(0.9000);transform-origin:100% 0;">20,99</span>
<span style="top:579.84px;font:12px 'Liberation Sans', sans-serif;line-height:16px;color:#000;white-space:pre;-webkit-text-stroke:0.08px #000;left:312.17px;transform:scaleX(0.9000);transform-origin:100% 0;">1.611,31</span>
<span style="top:579.84px;font:12px 'Liberation Sans', sans-serif;line-height:16px;color:#000;white-space:pre;-webkit-text-stroke:0.08px #000;left:391.28px;transform:scaleX(0.9000);transform-origin:100% 0;">4.585,70</span>
<span style="top:579.84px;font:12px 'Liberation Sans', sans-serif;line-height:16px;color:#000;white-space:pre;-webkit-text-stroke:0.08px #000;left:494.64px;transform:scaleX(0.9000);transform-origin:100% 0;">0,00</span>
<span style="top:579.84px;font:12px 'Liberation Sans', sans-serif;line-height:16px;color:#000;white-space:pre;-webkit-text-stroke:0.08px #000;left:574.64px;transform:scaleX(0.9000);transform-origin:100% 0;">0,00</span>
<span style="top:579.84px;font:12px 'Liberation Sans', sans-serif;line-height:16px;color:#000;white-space:pre;-webkit-text-stroke:0.08px #000;left:654.64px;transform:scaleX(0.9000);transform-origin:100% 0;">0,00</span>
<span style="top:579.84px;font:12px 'Liberation Sans', sans-serif;line-height:16px;color:#000;white-space:pre;-webkit-text-stroke:0.08px #000;left:711.28px;transform:scaleX(0.9000);transform-origin:100% 0;">6.197,01</span>
<span style="top:579.84px;font:12px 'Liberation Sans', sans-serif;line-height:16px;color:#000;white-space:pre;-webkit-text-stroke:0.08px #000;left:872.17px;transform:scaleX(0.9000);transform-origin:100% 0;">5.137,11</span>
<div style="left:143px;top:597px;width:860px;height:1px;background:#c4c4c4;"></div>
<span style="top:598.84px;font:12px 'Liberation Sans', sans-serif;line-height:16px;color:#000;white-space:pre;-webkit-text-stroke:0.08px #000;left:25.0px;transform:scaleX(0.8889);transform-origin:0 0;">Differenz</span>
<div style="left:143px;top:598px;width:79px;height:18px;background:#deffde;"></div>
<span style="top:598.84px;font:12px 'Liberation Sans', sans-serif;line-height:16px;color:#000;white-space:pre;-webkit-text-stroke:0.08px #000;left:181.30px;transform:scaleX(0.9000);transform-origin:100% 0;">46,887</span>
<div style="left:223px;top:598px;width:59px;height:18px;background:#ff8000;"></div>
<span style="top:598.84px;font:12px 'Liberation Sans', sans-serif;line-height:16px;color:#000;white-space:pre;-webkit-text-stroke:0.08px #000;left:250.64px;transform:scaleX(0.9000);transform-origin:100% 0;">-1,55</span>
<div style="left:283px;top:598px;width:79px;height:18px;background:#deffde;"></div>
<span style="top:598.84px;font:12px 'Liberation Sans', sans-serif;line-height:16px;color:#000;white-space:pre;-webkit-text-stroke:0.08px #000;left:321.30px;transform:scaleX(0.9000);transform-origin:100% 0;">792,19</span>
<div style="left:363px;top:598px;width:79px;height:18px;background:#deffde;"></div>
<span style="top:598.84px;font:12px 'Liberation Sans', sans-serif;line-height:16px;color:#000;white-space:pre;-webkit-text-stroke:0.08px #000;left:391.28px;transform:scaleX(0.9000);transform-origin:100% 0;">2.525,64</span>
<div style="left:443px;top:598px;width:79px;height:18px;background:#deffde;"></div>
<span style="top:598.84px;font:12px 'Liberation Sans', sans-serif;line-height:16px;color:#000;white-space:pre;-webkit-text-stroke:0.08px #000;left:494.64px;transform:scaleX(0.9000);transform-origin:100% 0;">0,00</span>
<div style="left:523px;top:598px;width:79px;height:18px;background:#deffde;"></div>
<span style="top:598.84px;font:12px 'Liberation Sans', sans-serif;line-height:16px;color:#000;white-space:pre;-webkit-text-stroke:0.08px #000;left:574.64px;transform:scaleX(0.9000);transform-origin:100% 0;">0,00</span>
<div style="left:603px;top:598px;width:79px;height:18px;background:#deffde;"></div>
<span style="top:598.84px;font:12px 'Liberation Sans', sans-serif;line-height:16px;color:#000;white-space:pre;-webkit-text-stroke:0.08px #000;left:654.64px;transform:scaleX(0.9000);transform-origin:100% 0;">0,00</span>
<div style="left:683px;top:598px;width:79px;height:18px;background:#deffde;"></div>
<span style="top:598.84px;font:12px 'Liberation Sans', sans-serif;line-height:16px;color:#000;white-space:pre;-webkit-text-stroke:0.08px #000;left:711.28px;transform:scaleX(0.9000);transform-origin:100% 0;">3.317,83</span>
<div style="left:843px;top:598px;width:79px;height:18px;background:#deffde;"></div>
<span style="top:598.84px;font:12px 'Liberation Sans', sans-serif;line-height:16px;color:#000;white-space:pre;-webkit-text-stroke:0.08px #000;left:867.28px;transform:scaleX(0.9000);transform-origin:100% 0;">-3.317,83</span>
<div style="left:143px;top:616px;width:860px;height:1px;background:#c4c4c4;"></div>
<div style="left:222px;top:560px;width:1px;height:57px;background:#c4c4c4;"></div>
<div style="left:282px;top:560px;width:1px;height:57px;background:#c4c4c4;"></div>
<div style="left:362px;top:560px;width:1px;height:57px;background:#c4c4c4;"></div>
<div style="left:442px;top:560px;width:1px;height:57px;background:#c4c4c4;"></div>
<div style="left:522px;top:560px;width:1px;height:57px;background:#c4c4c4;"></div>
<div style="left:602px;top:560px;width:1px;height:57px;background:#c4c4c4;"></div>
<div style="left:682px;top:560px;width:1px;height:57px;background:#c4c4c4;"></div>
<div style="left:762px;top:560px;width:1px;height:57px;background:#c4c4c4;"></div>
<div style="left:842px;top:560px;width:1px;height:57px;background:#c4c4c4;"></div>
<div style="left:922px;top:560px;width:1px;height:57px;background:#c4c4c4;"></div>
<span style="top:643.34px;font:12px 'Liberation Sans', sans-serif;line-height:16px;color:#000;white-space:pre;-webkit-text-stroke:0.08px #000;left:25.0px;transform:scaleX(0.8728);transform-origin:0 0;">ausgewählte Position</span>
<span style="top:643.34px;font:12px 'Liberation Sans', sans-serif;line-height:16px;color:#000;white-space:pre;-webkit-text-stroke:0.08px #000;left:144.5px;transform:scaleX(0.9235);transform-origin:0 0;">Projekt/Ktr. 00005/17</span>
<svg style="left:10.5px;top:688.6px" width="9" height="9" viewBox="0 0 9 9"><path d="M1 1L8 8M8 1L1 8" stroke="#666" stroke-width="2.3"/></svg>
<div style="left:10px;top:741px;width:12px;height:1px;background:repeating-linear-gradient(90deg,#a6a6a6 0 2px,transparent 2px 3px);"></div>
<div style="left:21px;top:687px;width:1290px;height:100px;background:linear-gradient(90deg,#ffffff 0px,#f4f4fe 250px,#dcdcfb 760px,#c9c9fa 1276px);border:1px solid #6e6e6e;"></div>
<svg style="left:22px;top:688px" width="1275" height="98" viewBox="22 688 1275 98"><linearGradient id="wallg" gradientUnits="userSpaceOnUse" x1="103" y1="0" x2="1297" y2="0"><stop offset="0" stop-color="#fff" stop-opacity="0.65"/><stop offset="0.3" stop-color="#fff" stop-opacity="0.5"/><stop offset="0.55" stop-color="#fff" stop-opacity="0.2"/><stop offset="0.8" stop-color="#fff" stop-opacity="0.08"/><stop offset="1" stop-color="#fff" stop-opacity="0.04"/></linearGradient><path d="M103 712H1297V754H103Z" fill="url(#wallg)"/><path d="M103 711H1297" stroke="#6a6a76" stroke-width="2"/><path d="M176.25 712V754" stroke="#d0d0d8" stroke-width="1"/><path d="M249.0 712V754" stroke="#d0d0d8" stroke-width="1"/><path d="M321.75 712V754" stroke="#d0d0d8" stroke-width="1"/><path d="M394.5 712V754" stroke="#d0d0d8" stroke-width="1"/><path d="M467.25 712V754" stroke="#d0d0d8" stroke-width="1"/><path d="M540.0 712V754" stroke="#d0d0d8" stroke-width="1"/><path d="M612.75 712V754" stroke="#d0d0d8" stroke-width="1"/><path d="M685.5 712V754" stroke="#d0d0d8" stroke-width="1"/><path d="M758.25 712V754" stroke="#d0d0d8" stroke-width="1"/><path d="M831.0 712V754" stroke="#d0d0d8" stroke-width="1"/><path d="M903.75 712V754" stroke="#d0d0d8" stroke-width="1"/><path d="M976.4999999999999 712V754" stroke="#d0d0d8" stroke-width="1"/><path d="M1049.25 712V754" stroke="#d0d0d8" stroke-width="1"/><path d="M1122.0 712V754" stroke="#d0d0d8" stroke-width="1"/><path d="M1194.75 712V754" stroke="#d0d0d8" stroke-width="1"/><path d="M1267.5 712V754" stroke="#d0d0d8" stroke-width="1"/><path d="M1340.25 712V754" stroke="#d0d0d8" stroke-width="1"/><path d="M103 744.5H1297" stroke="#c8c8d0" stroke-width="1"/><path d="M103 721.5H1297" stroke="#c8c8d0" stroke-width="1"/><path d="M95 761.5L103 754.2H1297V761.5Z" fill="#fff"/><path d="M103 753.9H1297" stroke="#3c3c3c" stroke-width="1"/><path d="M176.25 754.2L168.25 761" stroke="#b8b8b8" stroke-width="1"/><path d="M249.0 754.2L241.0 761" stroke="#b8b8b8" stroke-width="1"/><path d="M321.75 754.2L313.75 761" stroke="#b8b8b8" stroke-width="1"/><path d="M394.5 754.2L386.5 761" stroke="#b8b8b8" stroke-width="1"/><path d="M467.25 754.2L459.25 761" stroke="#b8b8b8" stroke-width="1"/><path d="M540.0 754.2L532.0 761" stroke="#b8b8b8" stroke-width="1"/><path d="M612.75 754.2L604.75 761" stroke="#b8b8b8" stroke-width="1"/><path d="M685.5 754.2L677.5 761" stroke="#b8b8b8" stroke-width="1"/><path d="M758.25 754.2L750.25 761" stroke="#b8b8b8" stroke-width="1"/><path d="M831.0 754.2L823.0 761" stroke="#b8b8b8" stroke-width="1"/><path d="M903.75 754.2L895.75 761" stroke="#b8b8b8" stroke-width="1"/><path d="M976.4999999999999 754.2L968.4999999999999 761" stroke="#b8b8b8" stroke-width="1"/><path d="M1049.25 754.2L1041.25 761" stroke="#b8b8b8" stroke-width="1"/><path d="M1122.0 754.2L1114.0 761" stroke="#b8b8b8" stroke-width="1"/><path d="M1194.75 754.2L1186.75 761" stroke="#b8b8b8" stroke-width="1"/><path d="M1267.5 754.2L1259.5 761" stroke="#b8b8b8" stroke-width="1"/><path d="M1340.25 754.2L1332.25 761" stroke="#b8b8b8" stroke-width="1"/><path d="M95.5 718.5L103.5 711.5V754.2L95.5 761.5Z" fill="#ffff80" stroke="#3a3a20" stroke-width="0.8"/><linearGradient id="g7232403" x1="0" y1="0" x2="0" y2="1"><stop offset="0" stop-color="#640000"/><stop offset="0.12" stop-color="#d40000"/><stop offset="0.66" stop-color="#b00000"/><stop offset="0.82" stop-color="#640000"/><stop offset="0.93" stop-color="#200000"/><stop offset="1" stop-color="#200000"/></linearGradient><path d="M96.5 722.7H445.20925V732.0H96.5Z" fill="#e00000"/><path d="M96.5 723.5L104.5 716.5H453.20925L445.20925 723.5Z" fill="url(#g7232403)"/><path d="M96.5 732.0H445.20925" stroke="#600000" stroke-width="0.8"/><linearGradient id="g7239514" x1="0" y1="0" x2="0" y2="1"><stop offset="0" stop-color="#700000"/><stop offset="0.12" stop-color="#f00000"/><stop offset="0.66" stop-color="#cc0000"/><stop offset="0.82" stop-color="#700000"/><stop offset="0.93" stop-color="#200000"/><stop offset="1" stop-color="#200000"/></linearGradient><path d="M445.20925 722.7H1479.90922V732.0H445.20925Z" fill="#ff0000"/><path d="M445.20925 723.5L453.20925 716.5H1487.90922L1479.90922 723.5Z" fill="url(#g7239514)"/><path d="M445.20925 732.0H1479.90922" stroke="#600000" stroke-width="0.8"/><path d="M445.50925 723.5L453.50925 716.5" stroke="#100000" stroke-width="1.5"/><path d="M445.50925 723.5V732.0" stroke="#100000" stroke-width="1.8"/><path d="M1479.90922 723.5L1487.90922 716.5V725.0L1479.90922 732.0Z" fill="#c00000" stroke="#5a0000" stroke-width="0.7"/><linearGradient id="g7461611" x1="0" y1="0" x2="0" y2="1"><stop offset="0" stop-color="#640000"/><stop offset="0.12" stop-color="#d40000"/><stop offset="0.66" stop-color="#b00000"/><stop offset="0.82" stop-color="#640000"/><stop offset="0.93" stop-color="#200000"/><stop offset="1" stop-color="#200000"/></linearGradient><path d="M96.5 745.7H329.945605V755.0H96.5Z" fill="#e00000"/><path d="M96.5 746.5L104.5 739.5H337.945605L329.945605 746.5Z" fill="url(#g7461611)"/><path d="M96.5 755.0H329.945605" stroke="#600000" stroke-width="0.8"/><linearGradient id="g7466197" x1="0" y1="0" x2="0" y2="1"><stop offset="0" stop-color="#700000"/><stop offset="0.12" stop-color="#f00000"/><stop offset="0.66" stop-color="#cc0000"/><stop offset="0.82" stop-color="#700000"/><stop offset="0.93" stop-color="#200000"/><stop offset="1" stop-color="#200000"/></linearGradient><path d="M329.945605 745.7H997.164955V755.0H329.945605Z" fill="#ff0000"/><path d="M329.945605 746.5L337.945605 739.5H1005.164955L997.164955 746.5Z" fill="url(#g7466197)"/><path d="M329.945605 755.0H997.164955" stroke="#600000" stroke-width="0.8"/><path d="M330.245605 746.5L338.245605 739.5" stroke="#100000" stroke-width="1.5"/><path d="M330.245605 746.5V755.0" stroke="#100000" stroke-width="1.8"/><path d="M997.164955 746.5L1005.164955 739.5V748.0L997.164955 755.0Z" fill="#c00000" stroke="#5a0000" stroke-width="0.7"/><path d="M95 718V762.5" stroke="#000" stroke-width="2"/><path d="M94 761.6H1297" stroke="#000" stroke-width="2.2"/><path d="M95.5 763V768" stroke="#9a9a9a" stroke-width="1.3"/><path d="M113.6875 763V765.5" stroke="#a8a8a8" stroke-width="1"/><path d="M131.875 763V765.5" stroke="#a8a8a8" stroke-width="1"/><path d="M150.0625 763V765.5" stroke="#a8a8a8" stroke-width="1"/><path d="M168.25 763V768" stroke="#9a9a9a" stroke-width="1.3"/><path d="M186.4375 763V765.5" stroke="#a8a8a8" stroke-width="1"/><path d="M204.625 763V765.5" stroke="#a8a8a8" stroke-width="1"/><path d="M222.8125 763V765.5" stroke="#a8a8a8" stroke-width="1"/><path d="M241.0 763V768" stroke="#9a9a9a" stroke-width="1.3"/><path d="M259.1875 763V765.5" stroke="#a8a8a8" stroke-width="1"/><path d="M277.375 763V765.5" stroke="#a8a8a8" stroke-width="1"/><path d="M295.5625 763V765.5" stroke="#a8a8a8" stroke-width="1"/><path d="M313.75 763V768" stroke="#9a9a9a" stroke-width="1.3"/><path d="M331.9375 763V765.5" stroke="#a8a8a8" stroke-width="1"/><path d="M350.125 763V765.5" stroke="#a8a8a8" stroke-width="1"/><path d="M368.3125 763V765.5" stroke="#a8a8a8" stroke-width="1"/><path d="M386.5 763V768" stroke="#9a9a9a" stroke-width="1.3"/><path d="M404.6875 763V765.5" stroke="#a8a8a8" stroke-width="1"/><path d="M422.875 763V765.5" stroke="#a8a8a8" stroke-width="1"/><path d="M441.0625 763V765.5" stroke="#a8a8a8" stroke-width="1"/><path d="M459.25 763V768" stroke="#9a9a9a" stroke-width="1.3"/><path d="M477.4375 763V765.5" stroke="#a8a8a8" stroke-width="1"/><path d="M495.625 763V765.5" stroke="#a8a8a8" stroke-width="1"/><path d="M513.8125 763V765.5" stroke="#a8a8a8" stroke-width="1"/><path d="M532.0 763V768" stroke="#9a9a9a" stroke-width="1.3"/><path d="M550.1875 763V765.5" stroke="#a8a8a8" stroke-width="1"/><path d="M568.375 763V765.5" stroke="#a8a8a8" stroke-width="1"/><path d="M586.5625 763V765.5" stroke="#a8a8a8" stroke-width="1"/><path d="M604.75 763V768" stroke="#9a9a9a" stroke-width="1.3"/><path d="M622.9375 763V765.5" stroke="#a8a8a8" stroke-width="1"/><path d="M641.125 763V765.5" stroke="#a8a8a8" stroke-width="1"/><path d="M659.3125 763V765.5" stroke="#a8a8a8" stroke-width="1"/><path d="M677.5 763V768" stroke="#9a9a9a" stroke-width="1.3"/><path d="M695.6875 763V765.5" stroke="#a8a8a8" stroke-width="1"/><path d="M713.875 763V765.5" stroke="#a8a8a8" stroke-width="1"/><path d="M732.0625 763V765.5" stroke="#a8a8a8" stroke-width="1"/><path d="M750.25 763V768" stroke="#9a9a9a" stroke-width="1.3"/><path d="M768.4375 763V765.5" stroke="#a8a8a8" stroke-width="1"/><path d="M786.625 763V765.5" stroke="#a8a8a8" stroke-width="1"/><path d="M804.8125 763V765.5" stroke="#a8a8a8" stroke-width="1"/><path d="M823.0 763V768" stroke="#9a9a9a" stroke-width="1.3"/><path d="M841.1875 763V765.5" stroke="#a8a8a8" stroke-width="1"/><path d="M859.375 763V765.5" stroke="#a8a8a8" stroke-width="1"/><path d="M877.5625 763V765.5" stroke="#a8a8a8" stroke-width="1"/><path d="M895.75 763V768" stroke="#9a9a9a" stroke-width="1.3"/><path d="M913.9375 763V765.5" stroke="#a8a8a8" stroke-width="1"/><path d="M932.125 763V765.5" stroke="#a8a8a8" stroke-width="1"/><path d="M950.3125 763V765.5" stroke="#a8a8a8" stroke-width="1"/><path d="M968.4999999999999 763V768" stroke="#9a9a9a" stroke-width="1.3"/><path d="M986.6874999999999 763V765.5" stroke="#a8a8a8" stroke-width="1"/><path d="M1004.8749999999999 763V765.5" stroke="#a8a8a8" stroke-width="1"/><path d="M1023.0624999999999 763V765.5" stroke="#a8a8a8" stroke-width="1"/><path d="M1041.25 763V768" stroke="#9a9a9a" stroke-width="1.3"/><path d="M1059.4375 763V765.5" stroke="#a8a8a8" stroke-width="1"/><path d="M1077.625 763V765.5" stroke="#a8a8a8" stroke-width="1"/><path d="M1095.8125 763V765.5" stroke="#a8a8a8" stroke-width="1"/><path d="M1114.0 763V768" stroke="#9a9a9a" stroke-width="1.3"/><path d="M1132.1875 763V765.5" stroke="#a8a8a8" stroke-width="1"/><path d="M1150.375 763V765.5" stroke="#a8a8a8" stroke-width="1"/><path d="M1168.5625 763V765.5" stroke="#a8a8a8" stroke-width="1"/><path d="M1186.75 763V768" stroke="#9a9a9a" stroke-width="1.3"/><path d="M1204.9375 763V765.5" stroke="#a8a8a8" stroke-width="1"/><path d="M1223.125 763V765.5" stroke="#a8a8a8" stroke-width="1"/><path d="M1241.3125 763V765.5" stroke="#a8a8a8" stroke-width="1"/><path d="M1259.5 763V768" stroke="#9a9a9a" stroke-width="1.3"/><path d="M1277.6875 763V765.5" stroke="#a8a8a8" stroke-width="1"/><path d="M1295.875 763V765.5" stroke="#a8a8a8" stroke-width="1"/><path d="M1314.0625 763V765.5" stroke="#a8a8a8" stroke-width="1"/><path d="M1332.25 763V768" stroke="#9a9a9a" stroke-width="1.3"/><path d="M1350.4375 763V765.5" stroke="#a8a8a8" stroke-width="1"/><path d="M1368.625 763V765.5" stroke="#a8a8a8" stroke-width="1"/><path d="M1386.8125 763V765.5" stroke="#a8a8a8" stroke-width="1"/><path d="M92 722H94" stroke="#b0b0b0" stroke-width="1"/><path d="M90.5 728H94" stroke="#9a9a9a" stroke-width="1.2"/><path d="M92 734H94" stroke="#b0b0b0" stroke-width="1"/><path d="M92 739.5H94" stroke="#b0b0b0" stroke-width="1"/><path d="M92 745H94" stroke="#b0b0b0" stroke-width="1"/><path d="M90.5 751H94" stroke="#9a9a9a" stroke-width="1.2"/><path d="M92 757H94" stroke="#b0b0b0" stroke-width="1"/></svg>
<span style="top:691.19px;font:11px 'Liberation Sans', sans-serif;line-height:16px;color:#1010e8;white-space:pre;letter-spacing:0.032px;left:729.30px;">Projekt/Ktr. 00005/17</span>
<span style="top:720.69px;font:11px 'Liberation Sans', sans-serif;line-height:16px;color:#000;white-space:pre;letter-spacing:0.289px;left:70.00px;">Soll</span>
<span style="top:743.69px;font:11px 'Liberation Sans', sans-serif;line-height:16px;color:#000;white-space:pre;letter-spacing:0.192px;left:77.30px;">Ist</span>
<span style="top:767.19px;font:11px 'Liberation Sans', sans-serif;line-height:16px;color:#000;white-space:pre;left:93.64px;">0</span>
<span style="top:767.19px;font:11px 'Liberation Sans', sans-serif;line-height:16px;color:#000;white-space:pre;left:160.27px;">500</span>
<span style="top:767.19px;font:11px 'Liberation Sans', sans-serif;line-height:16px;color:#000;white-space:pre;left:228.43px;">1.000</span>
<span style="top:767.19px;font:11px 'Liberation Sans', sans-serif;line-height:16px;color:#000;white-space:pre;left:301.18px;">1.500</span>
<span style="top:767.19px;font:11px 'Liberation Sans', sans-serif;line-height:16px;color:#000;white-space:pre;left:373.93px;">2.000</span>
<span style="top:767.19px;font:11px 'Liberation Sans', sans-serif;line-height:16px;color:#000;white-space:pre;left:446.68px;">2.500</span>
<span style="top:767.19px;font:11px 'Liberation Sans', sans-serif;line-height:16px;color:#000;white-space:pre;left:519.43px;">3.000</span>
<span style="top:767.19px;font:11px 'Liberation Sans', sans-serif;line-height:16px;color:#000;white-space:pre;left:592.18px;">3.500</span>
<span style="top:767.19px;font:11px 'Liberation Sans', sans-serif;line-height:16px;color:#000;white-space:pre;left:664.93px;">4.000</span>
<span style="top:767.19px;font:11px 'Liberation Sans', sans-serif;line-height:16px;color:#000;white-space:pre;left:737.68px;">4.500</span>
<span style="top:767.19px;font:11px 'Liberation Sans', sans-serif;line-height:16px;color:#000;white-space:pre;left:810.43px;">5.000</span>
<span style="top:767.19px;font:11px 'Liberation Sans', sans-serif;line-height:16px;color:#000;white-space:pre;left:883.18px;">5.500</span>
<span style="top:767.19px;font:11px 'Liberation Sans', sans-serif;line-height:16px;color:#000;white-space:pre;left:955.93px;">6.000</span>
<span style="top:767.19px;font:11px 'Liberation Sans', sans-serif;line-height:16px;color:#000;white-space:pre;left:1028.68px;">6.500</span>
<span style="top:767.19px;font:11px 'Liberation Sans', sans-serif;line-height:16px;color:#000;white-space:pre;left:1101.43px;">7.000</span>
<span style="top:767.19px;font:11px 'Liberation Sans', sans-serif;line-height:16px;color:#000;white-space:pre;left:1174.18px;">7.500</span>
<span style="top:767.19px;font:11px 'Liberation Sans', sans-serif;line-height:16px;color:#000;white-space:pre;left:1246.93px;">8.000</span>
</div></body></html>
